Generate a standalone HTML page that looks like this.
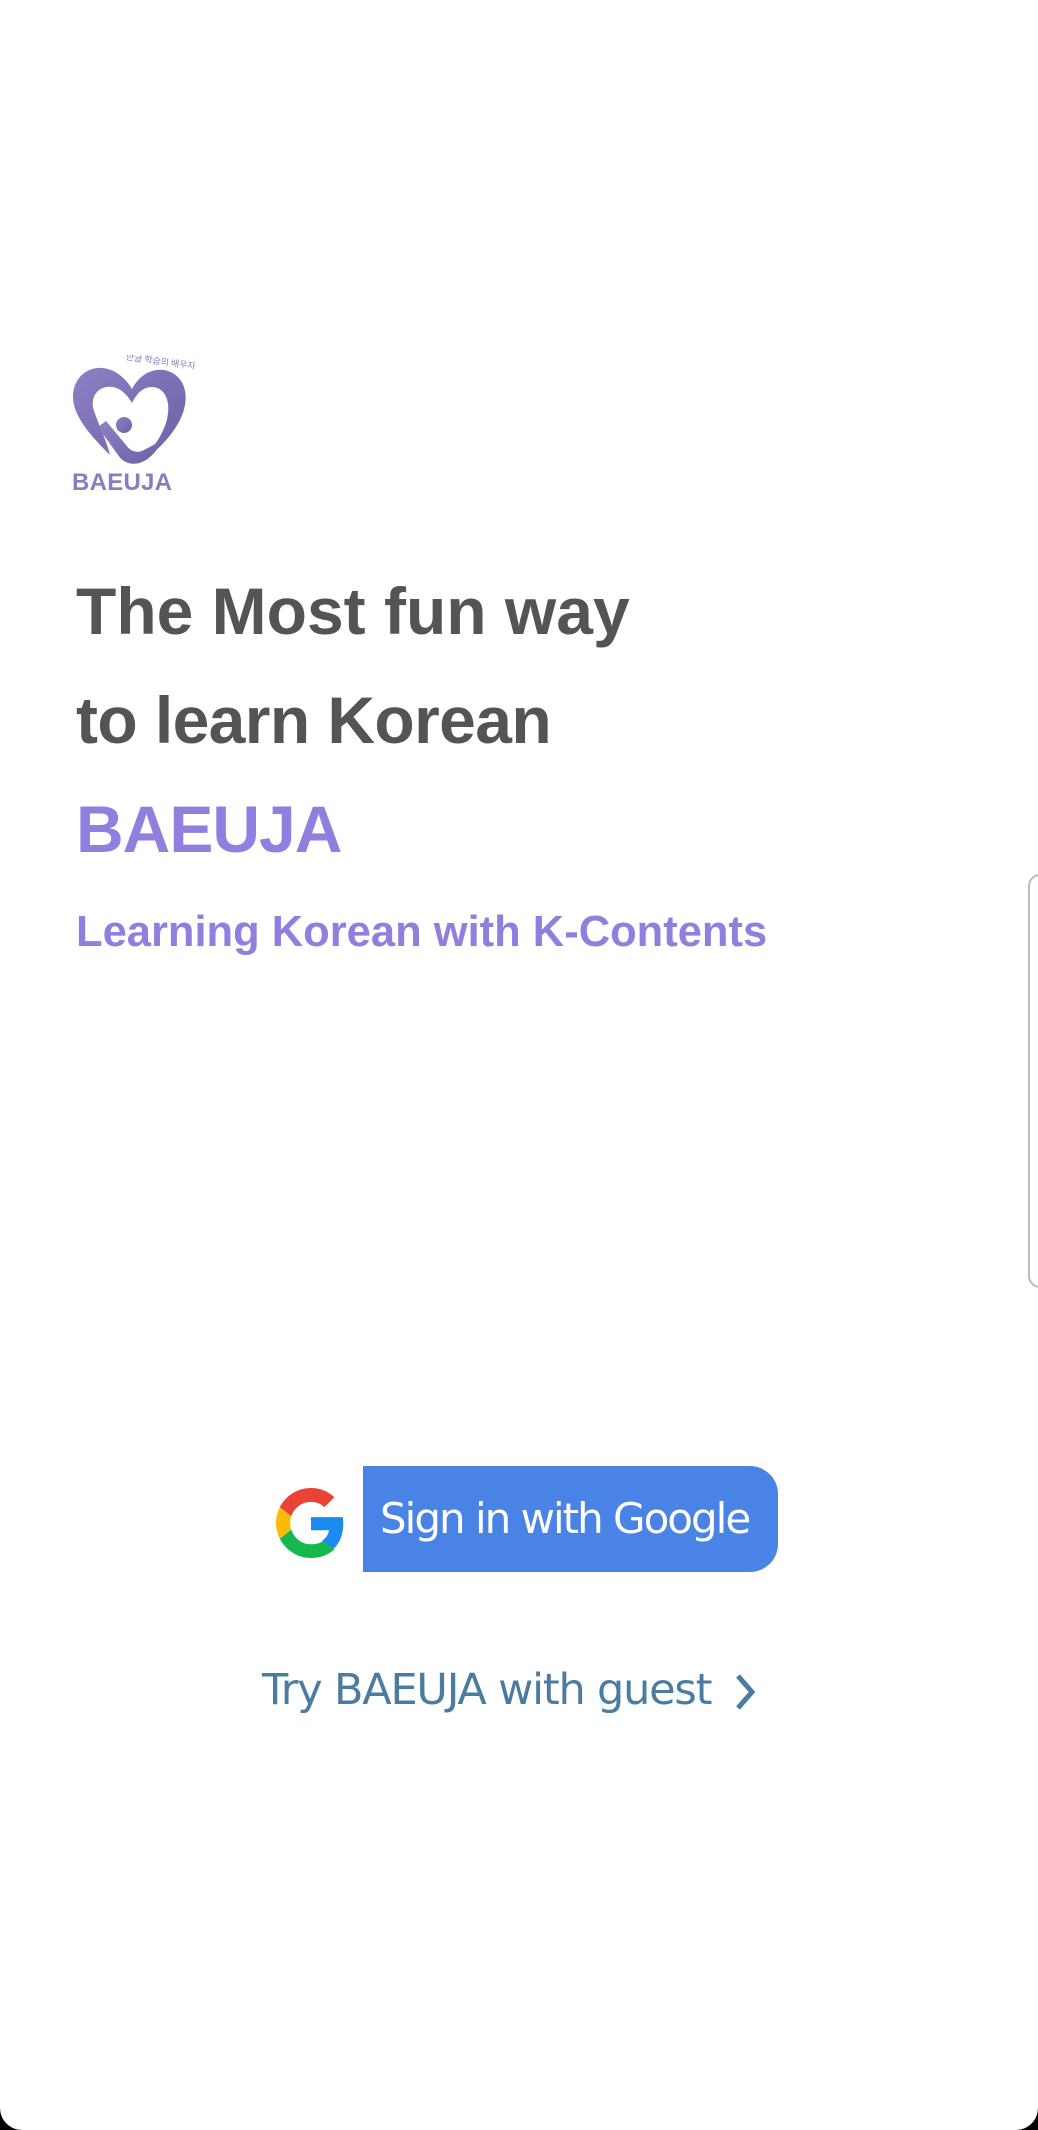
<!DOCTYPE html>
<html><head><meta charset="utf-8"><style>
html,body{margin:0;padding:0;background:#000;}
.page{position:relative;width:1038px;height:2130px;background:#fff;border-radius:0 0 22px 22px;overflow:hidden;font-family:"Liberation Sans","Noto Sans CJK KR",sans-serif;}
.h{position:absolute;left:76px;font-weight:bold;font-size:66px;line-height:80px;color:#545454;white-space:nowrap;}
.p{color:#917fe0;letter-spacing:-1px;}
.sub{position:absolute;left:76px;top:904px;font-weight:bold;font-size:43.5px;line-height:56px;color:#917fe0;white-space:nowrap;}
.btn{position:absolute;left:363px;top:1466px;width:415px;height:106px;background:#4a83e6;border-radius:0 28px 28px 0;color:#fff;font-size:42px;line-height:106px;text-indent:17px;white-space:nowrap;font-family:"DejaVu Sans","Liberation Sans",sans-serif;letter-spacing:-2px;overflow:hidden;}
.guest{position:absolute;left:262px;top:1660px;font-size:43px;line-height:60px;color:#4a7ba1;white-space:nowrap;font-family:"DejaVu Sans","Liberation Sans",sans-serif;letter-spacing:-1.2px;}
.sheet{position:absolute;left:1028px;top:874px;width:30px;height:410px;border:2px solid #bbb;border-radius:12px;background:#fff;}
</style></head><body><div class="page">
<svg style="position:absolute;left:70px;top:355px" width="125" height="140" viewBox="0 0 125 140">
<defs><linearGradient id="g" x1="0" y1="0" x2="1" y2="1"><stop offset="0" stop-color="#8e80c4"/><stop offset="1" stop-color="#6d5fa4"/></linearGradient></defs>
<path d="M40 100 C20 80 2 60 3 40 C4 22 18 12 32 13 C46 14 56 24 62 34 C68 22 80 13 94 15 C110 18 118 32 115 50 C112 68 96 90 70 108 C82 94 96 78 98 58 C100 42 92 32 82 32 C72 32 66 40 62 48 C56 38 48 30 36 32 C26 34 20 44 24 56 C28 68 36 84 40 100 Z" fill="url(#g)"/>
<path d="M28 72 L48 100 C56 112 72 112 84 98 L96 84 C90 86 80 92 72 96 C66 98 60 96 56 90 L36 66 Z" fill="url(#g)"/>
<circle cx="54" cy="70" r="8" fill="url(#g)"/>
<text x="55" y="8" font-size="9" fill="#8a7cc0" font-family="Noto Sans CJK KR,sans-serif" transform="rotate(8 80 10)">한글 학습의 배우자!</text>
<text x="2" y="135" font-size="24" font-weight="bold" fill="#8a7cc0" font-family="Liberation Sans,sans-serif" textLength="100">BAEUJA</text>
</svg>
<div class="h" style="top:571px">The Most fun way</div>
<div class="h" style="top:680px;letter-spacing:-0.6px">to learn Korean</div>
<div class="h p" style="top:789px">BAEUJA</div>
<div class="sub">Learning Korean with K-Contents</div>
<div class="sheet"></div>
<svg style="position:absolute;left:276px;top:1487px" width="70" height="72" viewBox="0 0 48 48">
<path d="M24 9.5c3.5 0 6.7 1.2 9.2 3.6l6.8-6.8C35.9 2.4 30.5 0 24 0 14.6 0 6.6 5.4 2.6 13.2l7.9 6.2C12.4 13.7 17.7 9.5 24 9.5z" fill="#ea4335"/>
<path d="M46.1 24.5c0-1.6-.1-3.1-.4-4.5H24v9h12.4c-.5 2.9-2.2 5.4-4.7 7.1l7.6 5.9c4.4-4.1 6.8-10.1 6.8-17.5z" fill="#1a8cf0"/>
<path d="M10.5 28.6c-.5-1.4-.8-3-.8-4.6s.3-3.2.8-4.6l-7.9-6.2C1 16.5 0 20.1 0 24s1 7.5 2.6 10.8l7.9-6.2z" fill="#fbbc05"/>
<path d="M24 48c6.5 0 11.9-2.1 15.9-5.8l-7.6-5.9c-2.1 1.4-4.9 2.3-8.3 2.3-6.3 0-11.6-4.2-13.5-10l-7.9 6.2C6.6 42.6 14.6 48 24 48z" fill="#14b84d"/>
</svg>
<div class="btn">Sign in with Google</div>
<div class="guest">Try BAEUJA with guest</div>
<svg style="position:absolute;left:730px;top:1672px" width="30" height="40" viewBox="0 0 30 40"><path d="M8 4 L22 20 L8 36" fill="none" stroke="#4a7ba1" stroke-width="5"/></svg>
</div></body></html>
